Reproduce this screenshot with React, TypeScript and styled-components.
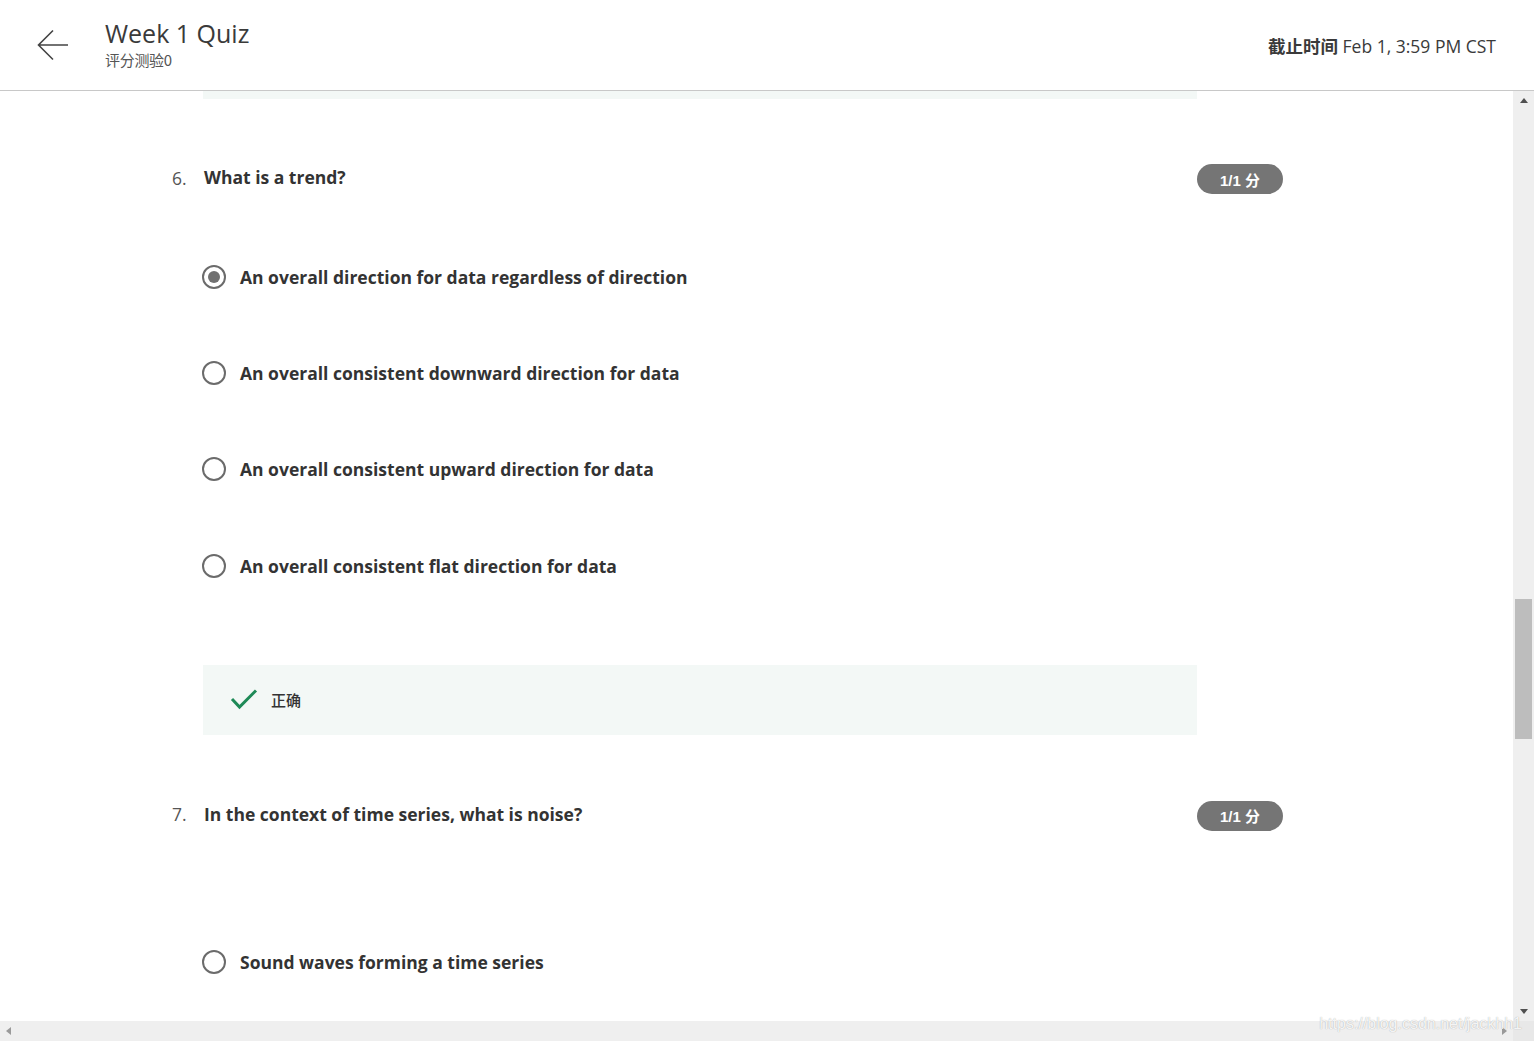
import React from 'react';
import styled, { createGlobalStyle } from 'styled-components';

const Global = createGlobalStyle`
  html, body {
    margin: 0;
    padding: 0;
    background: #fff;
    overflow: hidden;
  }
  body {
    font-family: "Open Sans", "Noto Sans CJK SC", sans-serif;
    color: #333;
  }
`;

const Page = styled.div`
  width: 1534px;
  height: 1041px;
  display: flex;
  flex-direction: column;
  position: relative;
  overflow: hidden;
`;

const Header = styled.header`
  height: 91px;
  flex: none;
  display: flex;
  align-items: center;
  padding: 0 38px 0 36px;
  border-bottom: 1px solid #c8c8c8;
  box-sizing: border-box;
`;

const BackButton = styled.button`
  width: 34px;
  height: 34px;
  border: none;
  background: none;
  padding: 0;
  margin-right: 35px;
  display: flex;
  align-items: center;
  justify-content: center;
  cursor: pointer;
`;

const TitleBlock = styled.div`
  display: flex;
  flex-direction: column;
  flex: 1;
  margin-top: -3px;
`;

const Title = styled.h1`
  margin: 0;
  font-size: 25px;
  font-weight: 400;
  line-height: 30px;
  color: #3a3a3a;
`;

const Subtitle = styled.div`
  font-size: 15px;
  line-height: 20px;
  margin-top: 2px;
  color: #555;
  font-family: "Noto Sans CJK SC", "Open Sans", sans-serif;
  letter-spacing: -0.3px;
`;

const Deadline = styled.div`
  font-size: 17.5px;
  color: #3a3a3a;
  b {
    font-weight: 700;
    font-family: "Noto Sans CJK SC", sans-serif;
  }
`;

const Body = styled.div`
  flex: 1;
  display: flex;
  min-height: 0;
`;

const Content = styled.main`
  flex: 1;
  overflow: hidden;
  padding-left: 172px;
`;

const VScroll = styled.div`
  width: 21px;
  flex: none;
  background: #efefef;
  display: flex;
  flex-direction: column;
  align-items: center;
  justify-content: space-between;
  padding: 7px 0;
  box-sizing: border-box;
`;

const VThumb = styled.div`
  width: 17px;
  height: 140px;
  background: #bdbdbd;
  margin-top: 496px;
`;

const HScrollRow = styled.div`
  height: 20px;
  flex: none;
  display: flex;
  background: #efefef;
`;

const HTrack = styled.div`
  flex: 1;
  display: flex;
  align-items: center;
  justify-content: space-between;
  padding: 0 6px;
`;

const Corner = styled.div`
  width: 21px;
  background: #e8e8e8;
`;

const Arrow = styled.span<{ dir: 'up' | 'down' | 'left' | 'right' }>`
  width: 0;
  height: 0;
  border: 4px solid transparent;
  ${p => p.dir === 'up' && 'border-bottom: 5px solid #505050; border-top-width: 0;'}
  ${p => p.dir === 'down' && 'border-top: 5px solid #505050; border-bottom-width: 0;'}
  ${p => p.dir === 'left' && 'border-right: 5px solid #9a9a9a; border-left-width: 0;'}
  ${p => p.dir === 'right' && 'border-left: 5px solid #9a9a9a; border-right-width: 0;'}
`;

const Feedback = styled.div<{ partial?: boolean }>`
  width: 994px;
  margin-left: 31px;
  height: ${p => (p.partial ? '8px' : '70px')};
  background: #f3f8f6;
  display: flex;
  align-items: center;
  padding-left: 27px;
  box-sizing: border-box;
`;

const FeedbackText = styled.span`
  font-family: "Noto Sans CJK SC", sans-serif;
  font-size: 15px;
  font-weight: 500;
  color: #333;
  margin-left: 13px;
`;

const QuestionRow = styled.div<{ top: number }>`
  width: 1111px;
  margin-top: ${p => p.top}px;
  display: flex;
  align-items: center;
  height: 30px;
`;

const QNumber = styled.span`
  width: 32px;
  font-size: 17.5px;
  color: #555;
  margin-top: -3px;
`;

const QText = styled.span`
  flex: 1;
  font-size: 17.5px;
  font-weight: 700;
  color: #333;
  margin-top: -4px;
`;

const Badge = styled.span`
  width: 86px;
  height: 30px;
  border-radius: 15px;
  background: #757575;
  color: #fff;
  font-family: "Liberation Sans", "Noto Sans CJK SC", sans-serif;
  font-size: 15px;
  font-weight: 700;
  display: flex;
  align-items: center;
  justify-content: center;
`;

const Options = styled.div<{ top: number }>`
  display: flex;
  flex-direction: column;
  gap: 72.2px;
  margin-top: ${p => p.top}px;
  margin-left: 30px;
`;

const Option = styled.label`
  display: flex;
  align-items: center;
  height: 24px;
  gap: 14px;
  font-size: 17.5px;
  font-weight: 700;
  color: #333;
`;

const Radio = styled.span<{ checked?: boolean }>`
  width: 24px;
  height: 24px;
  border-radius: 50%;
  border: 2px solid #6b6b6b;
  box-sizing: border-box;
  display: flex;
  align-items: center;
  justify-content: center;
  flex: none;
  &::after {
    content: '';
    width: 12px;
    height: 12px;
    border-radius: 50%;
    background: ${p => (p.checked ? '#707070' : 'transparent')};
  }
`;

const Watermark = styled.div`
  position: absolute;
  right: 12px;
  bottom: 8px;
  font-family: "Liberation Sans", sans-serif;
  font-size: 16px;
  color: rgba(255, 255, 255, 0.9);
  text-shadow: 0 0 1px rgba(0, 0, 0, 0.35);
`;

const Check = () => (
  <svg width="28" height="22" viewBox="0 0 28 22">
    <path d="M2 10 L9.5 18 L26 1.5" fill="none" stroke="#1e8a57" strokeWidth="3" />
  </svg>
);

const q6 = [
  { text: 'An overall direction for data regardless of direction', checked: true },
  { text: 'An overall consistent downward direction for data' },
  { text: 'An overall consistent upward direction for data' },
  { text: 'An overall consistent flat direction for data' },
];

export default function App() {
  return (
    <Page>
      <Global />
      <Header>
        <BackButton aria-label="back">
          <svg width="32" height="32" viewBox="0 0 32 32">
            <path d="M31 16 H2 M16 1.5 L1.5 16 L16 30.5" fill="none" stroke="#444" strokeWidth="1.6" />
          </svg>
        </BackButton>
        <TitleBlock>
          <Title>Week 1 Quiz</Title>
          <Subtitle>评分测验0</Subtitle>
        </TitleBlock>
        <Deadline>
          <b>截止时间</b> Feb 1, 3:59 PM CST
        </Deadline>
      </Header>
      <Body>
        <Content>
          <Feedback partial />
          <QuestionRow top={65}>
            <QNumber>6.</QNumber>
            <QText>What is a trend?</QText>
            <Badge>1/1 分</Badge>
          </QuestionRow>
          <Options top={71}>
            {q6.map((o, i) => (
              <Option key={i}>
                <Radio checked={o.checked} />
                {o.text}
              </Option>
            ))}
          </Options>
          <div style={{ height: 87 }} />
          <Feedback>
            <Check />
            <FeedbackText>正确</FeedbackText>
          </Feedback>
          <QuestionRow top={66}>
            <QNumber>7.</QNumber>
            <QText>In the context of time series, what is noise?</QText>
            <Badge>1/1 分</Badge>
          </QuestionRow>
          <Options top={119}>
            <Option>
              <Radio />
              Sound waves forming a time series
            </Option>
          </Options>
        </Content>
        <VScroll>
          <Arrow dir="up" />
          <VThumb />
          <div style={{ flex: 1 }} />
          <Arrow dir="down" />
        </VScroll>
      </Body>
      <HScrollRow>
        <HTrack>
          <Arrow dir="left" />
          <Arrow dir="right" />
        </HTrack>
        <Corner />
      </HScrollRow>
      <Watermark>https://blog.csdn.net/jackhh1</Watermark>
    </Page>
  );
}
